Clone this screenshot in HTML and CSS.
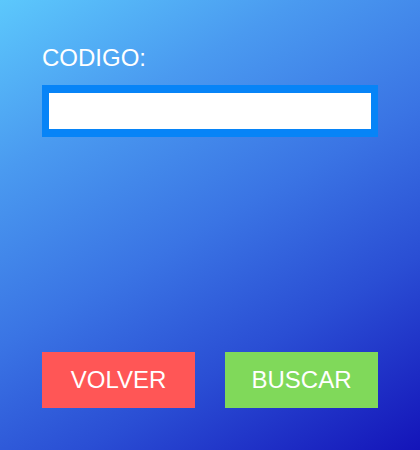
FILE: index.html
```html
<!DOCTYPE html>
<html>
<head>
<meta charset="utf-8">
<link rel="stylesheet" href="styles.css">
</head>
<body>
<div class="page">
  <label class="label" for="codigo">CODIGO:</label>
  <input class="field" id="codigo" type="text">
  <div class="spacer"></div>
  <div class="actions">
    <button class="btn btn-back">VOLVER</button>
    <button class="btn btn-search">BUSCAR</button>
  </div>
</div>
</body>
</html>
```
FILE: styles.css
```css
html, body {
  margin: 0;
  height: 100%;
}
body {
  background: linear-gradient(150deg, #5cc8fc 0%, #4a9af0 25%, #3a74e4 50%, #2a4ed4 72%, #1414b9 100%);
  font-family: "Liberation Sans", Arial, sans-serif;
}
.page {
  box-sizing: border-box;
  height: 450px;
  padding: 44px 42px 0 42px;
  display: flex;
  flex-direction: column;
}
.label {
  color: #ffffff;
  font-size: 24px;
  line-height: 28px;
  display: block;
}
.field {
  margin-top: 13px;
  box-sizing: border-box;
  width: 336px;
  height: 52px;
  border: 7px solid #0784f7;
  border-top-width: 8px;
  border-bottom-width: 8px;
  background: #ffffff;
  outline: none;
  padding: 0;
}
.spacer {
  height: 215px;
}
.actions {
  display: flex;
  gap: 30px;
}
.btn {
  width: 153px;
  height: 56px;
  border: none;
  color: #ffffff;
  font-family: "Liberation Sans", Arial, sans-serif;
  font-size: 24px;
  padding: 0;
}
.btn-back {
  background: #ff5656;
}
.btn-search {
  background: #80d95a;
}
```
